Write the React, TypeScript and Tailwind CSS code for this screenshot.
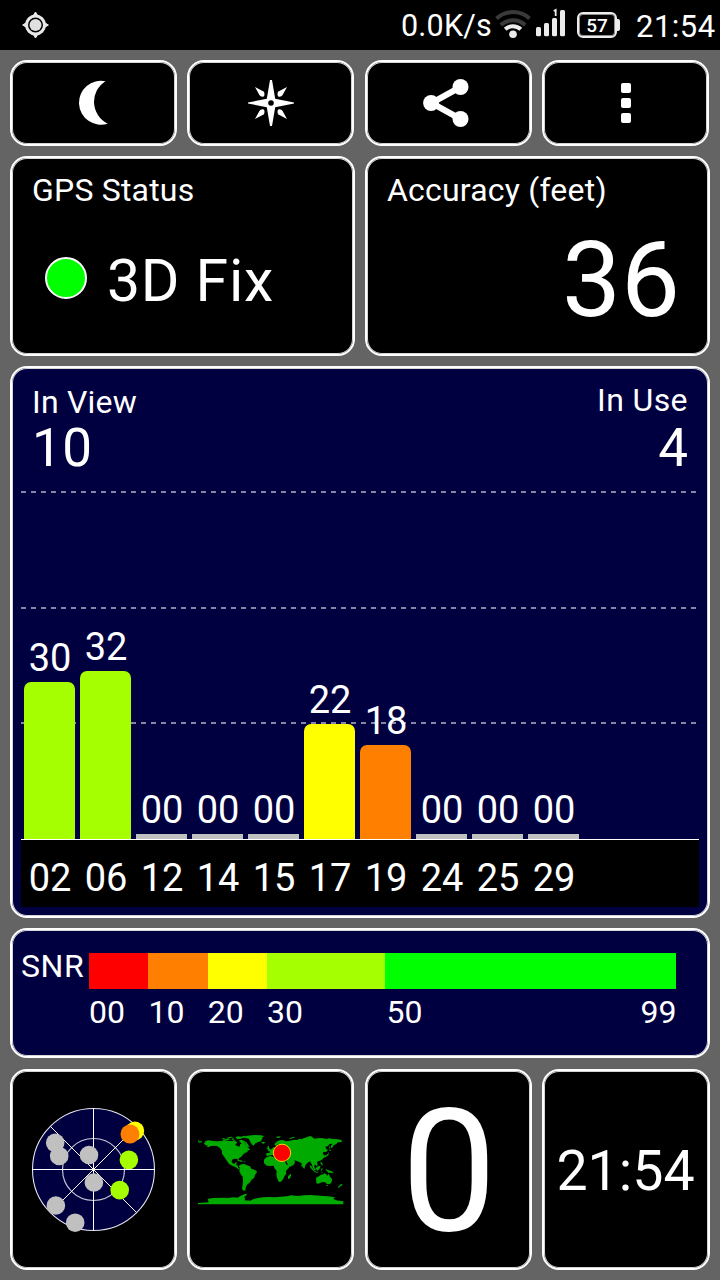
import type { ReactNode } from "react";

function Card({ className = "", children }: { className?: string; children: ReactNode }) {
  return (
    <div
      className={`min-w-0 rounded-[17px] border-2 border-white shadow-[inset_0_0_0_1px_#d4d4d8] ${className}`}
    >
      {children}
    </div>
  );
}

const satellites = [
  { id: "02", snr: "30", height: 157, color: "bg-[#a6ff00]" },
  { id: "06", snr: "32", height: 168, color: "bg-[#a6ff00]" },
  { id: "12", snr: "00", height: 5, color: "bg-[#c0c0c0]" },
  { id: "14", snr: "00", height: 5, color: "bg-[#c0c0c0]" },
  { id: "15", snr: "00", height: 5, color: "bg-[#c0c0c0]" },
  { id: "17", snr: "22", height: 115, color: "bg-[#ffff00]" },
  { id: "19", snr: "18", height: 94, color: "bg-[#ff8000]" },
  { id: "24", snr: "00", height: 5, color: "bg-[#c0c0c0]" },
  { id: "25", snr: "00", height: 5, color: "bg-[#c0c0c0]" },
  { id: "29", snr: "00", height: 5, color: "bg-[#c0c0c0]" },
];

const dash =
  "h-[2px] w-[676px] bg-[repeating-linear-gradient(90deg,#8585a6_0_5px,transparent_5px_10px)]";

function StatusBar() {
  return (
    <header className="flex h-[50px] shrink-0 items-start bg-black">
      <svg className="mt-[12px] ml-[22px]" width="27" height="27" viewBox="0 0 27 27">
        <path d="M13.5 0l2 3.2h-4zM13.5 26l2-3.2h-4zM.6 13l3.2-2v4zM26.4 13l-3.2-2v4z" fill="#e8e8e8" stroke="#e8e8e8" strokeWidth="1" />
        <circle cx="13.5" cy="13" r="9" fill="none" stroke="#e8e8e8" strokeWidth="3" />
        <circle cx="13.5" cy="13" r="6" fill="#e0e0e0" />
      </svg>
      <span className="mt-[11px] ml-[352px] w-[94px] text-[30.5px] leading-[30px] tracking-[0.2px]">0.0K/s</span>
      <svg className="mt-[8px]" width="37" height="31" viewBox="0 0 37 31" fill="none">
        <path d="M1.5 10.5a24.5 24.5 0 0 1 33 0" stroke="#3a3a3a" strokeWidth="4" />
        <path d="M5.8 17a18 18 0 0 1 24.4 0" stroke="#3a3a3a" strokeWidth="4" />
        <path d="M10.2 21.3a11.5 11.5 0 0 1 15.6 0" stroke="#ececec" strokeWidth="4" />
        <circle cx="18" cy="26.2" r="3.8" fill="#ececec" />
      </svg>
      <svg className="mt-[8px] ml-[3px]" width="31" height="30" viewBox="0 0 31 30" fill="#ececec">
        <rect x="1" y="19" width="5" height="9.3" rx="1.5" />
        <rect x="9" y="15" width="5" height="13.3" rx="1.5" />
        <rect x="17" y="10" width="5" height="18.3" rx="1.5" />
        <rect x="25" y="2" width="5" height="26.3" rx="1.5" />
        <path d="M20.7 8V2l-2 1" fill="none" stroke="#ececec" strokeWidth="1.8" />
      </svg>
      <div className="mt-[12px] ml-[11px] flex h-[26px] w-[40px] items-center justify-center rounded-[6px] border-2 border-[#ececec] text-[19px] leading-none font-medium shadow-[inset_0_0_0_1px_#909090]">
        57
      </div>
      <div className="mt-[19px] h-[12px] w-[3px] rounded-r-[2px] bg-[#ececec]" />
      <span className="mt-[11px] ml-[16px] text-[31px] leading-none tracking-[0.5px]">21:54</span>
    </header>
  );
}

function Toolbar() {
  return (
    <div className="grid h-[86px] grid-cols-[167px_168px_167px_167px] gap-[10px]">
      <Card className="flex items-center justify-center bg-black">
        <svg width="29" height="46" viewBox="0 0 29 46">
          <path d="M26.5 1.2A22 22 0 1 0 28.7 43.7A24.3 24.3 0 0 1 26.5 1.2z" fill="#fff" />
        </svg>
      </Card>
      <Card className="mr-px flex items-center justify-center bg-black">
        <svg width="46" height="46" viewBox="-23 -23 46 46" fill="#fff">
          <path d="M0-23L1-23L4.2-4.2L23-.5V.5L4.2 4.2L1 23H-1L-4.2 4.2L-23 .5V-.5L-4.2-4.2L-1-23z" />
          <path d="M16-16L7-11.2Q5.6-7 8-6.2Q10.6-6 11.6-8z" />
          <path d="M16 16L7 11.2Q5.6 7 8 6.2Q10.6 6 11.6 8z" />
          <path d="M-16-16L-7-11.2Q-5.6-7-8-6.2Q-10.6-6-11.6-8z" />
          <path d="M-16 16L-7 11.2Q-5.6 7-8 6.2Q-10.6 6-11.6 8z" />
          <circle r="2.8" fill="#000" />
        </svg>
      </Card>
      <Card className="flex items-center justify-center bg-black">
        <svg className="-translate-x-[3.5px]" width="48" height="50" viewBox="0 0 48 50" fill="#fff">
          <path d="M39 9L10 25L39 41" fill="none" stroke="#fff" strokeWidth="6" />
          <circle cx="39" cy="9" r="8" />
          <circle cx="9.6" cy="25" r="8" />
          <circle cx="39" cy="41" r="8" />
        </svg>
      </Card>
      <Card className="flex flex-col items-center justify-center gap-[5px] bg-black pl-px">
        <i className="size-[10px] rounded-[2px] bg-white" />
        <i className="size-[10px] rounded-[2px] bg-white" />
        <i className="size-[10px] rounded-[2px] bg-white" />
      </Card>
    </div>
  );
}

function SatelliteChart() {
  return (
    <Card className="relative h-[552px] bg-[#000040]">
      <div className="flex justify-between px-[20px] pt-[16px]">
        <div>
          <div className="mt-[2px] text-[32px] leading-none tracking-[0.2px]">In View</div>
          <div className="mt-[4px] text-[53px] leading-[52px] tracking-[0.4px]">10</div>
        </div>
        <div className="text-right">
          <div className="text-[32px] leading-none tracking-[0.4px]">In Use</div>
          <div className="mt-[6px] text-[53px] leading-[52px]">4</div>
        </div>
      </div>
      <div className="absolute top-[123px] left-[9px] flex flex-col gap-[113.5px]">
        <div className={dash} />
        <div className={dash} />
        <div className={dash} />
      </div>
      <div className="absolute top-[244px] left-[9px] flex h-[228px] w-[678px] items-end gap-[5px] border-b border-white pl-[3px]">
        {satellites.map((s) => (
          <div key={s.id} className="flex w-[51px] flex-col items-center">
            <span className="mb-[5px] ml-px text-[38px] leading-none tracking-[-0.2px]">{s.snr}</span>
            <div
              className={`w-full ${s.height > 10 ? "rounded-t-[7px]" : ""} ${s.color}`}
              style={{ height: s.height }}
            />
          </div>
        ))}
      </div>
      <div className="absolute top-[472px] left-[9px] flex h-[67px] w-[678px] gap-[5px] bg-black pt-[19px] pl-[3px]">
        {satellites.map((s) => (
          <span key={s.id} className="w-[51px] pl-px text-center text-[38px] leading-none tracking-[-0.2px]">
            {s.id}
          </span>
        ))}
      </div>
    </Card>
  );
}

function SnrLegend() {
  return (
    <Card className="flex h-[130px] bg-[#000040] pl-[9px]">
      <div className="mt-[20px] w-[68px] text-[32px] leading-none tracking-[0.6px]">SNR</div>
      <div className="pt-[23px]">
        <div className="flex h-[36px]">
          <div className="w-[59.4px] bg-[#ff0000]" />
          <div className="w-[59.3px] bg-[#ff8000]" />
          <div className="w-[59.3px] bg-[#ffff00]" />
          <div className="w-[118.5px] bg-[#a6ff00]" />
          <div className="w-[291px] bg-[#00ff00]" />
        </div>
        <div className="mt-[7px] flex text-[32px] leading-none">
          <span className="w-[59.4px]">00</span>
          <span className="w-[59.3px]">10</span>
          <span className="w-[59.3px]">20</span>
          <span className="w-[119.5px]">30</span>
          <span className="w-[100px]">50</span>
          <span className="w-[190px] text-right">99</span>
        </div>
      </div>
    </Card>
  );
}

function SkyView() {
  return (
    <svg className="-translate-x-[0.5px] -translate-y-[0.5px]" width="126" height="126" viewBox="-63 -63 126 126">
      <circle r="61" fill="#000040" stroke="#e4e4ee" strokeWidth="1.1" />
      <circle r="31" fill="none" stroke="#c4c4d6" strokeWidth="1.2" />
      <path d="M-61 0H61M0-61V61M-43-43L43 43M43-43L-43 43" stroke="#fff" strokeWidth="1" />
      <g fill="#c0c0c0">
        <circle cx="-38.3" cy="-26.7" r="9.3" />
        <circle cx="-34.3" cy="-13.5" r="9.3" />
        <circle cx="-4.5" cy="-14.5" r="9.3" />
        <circle cx="0.4" cy="13" r="9.3" />
        <circle cx="-37.6" cy="36" r="9.3" />
        <circle cx="-18.3" cy="53.2" r="9.3" />
      </g>
      <circle cx="41.4" cy="-38.7" r="9.3" fill="#ffff00" />
      <circle cx="36.5" cy="-35.5" r="9.5" fill="#ff8000" />
      <circle cx="35.4" cy="-9.7" r="9.3" fill="#a6ff00" />
      <circle cx="26.2" cy="20.6" r="9.3" fill="#a6ff00" />
    </svg>
  );
}

function WorldMap() {
  return (
    <svg width="150" height="75" viewBox="48 66 450 225" fill="#00aa00">
      <path d="M54 91l3-1v4h9v3l-10 1zM71 99l6-3-2-3 10-2 14 2 12 1 14-1 6-3 12 2 14 1 7-3 3 4 5 3-6 7 4 3 9 3 1-7 5-2-6-6 2-3 8 4 5 3 4 8 8 7 5 5-9 3 1 4-9 3-6 6-4 5-7 4-2 8-3-5-9-1-7 3-1 6 3 5 5 1 5-4h3l-3 8 6 2 0 6 6 3-4 2-9-6-8-4-11-5-5-7-6-9-6-9-5-7v-9l-6-7-7-6-10-2-10 1-8 4-6-4 5-3-7 1z" />
      <path d="M124 87l8-3 4 3 10-2 6 3-12 3zM138 83l14-3 8 1-8 3zM154 87l6-2 3 3-5 3zM166 82l8-3 10 1 8-3 6 2-9 4-8 4-9 1zM176 92l8-3 9 4 8 5 4 7 4 6-8-1-7-4 4-4-8-5-9-2z" />
      <path d="M186 82l16-5 20-2 22 1 8 3-6 4 2 4-5 3 2 3-10 3-9 4-5 7-6-4-5-9-4-8-9-2z" />
      <path d="M244 97l7-2 5 2-5 4-6-1zM259 115l4-1-1-5 3-2 4 9 4 6-9 2 1-4zM172 150l10 1 9 3-8 1-10-3zM190 154l8 1-5 2z" />
      <path d="M177 167l7-4 9-1 8 4 9 3 4 7 9 3 7 4v6l-5 5-2 9-9 7-5 8-7 5-4 8-2 8 3 2-9 1-4-6 2-12 1-12-1-12-5-6-5-10 1-9z" />
      <path d="M259 138v-9h8l3-2-3-7 8-3 7-7 3 5 9-2 4-7-3-4-6 5-5-1v-5l6-6 8-4 11-1 9 4 12-2 12-3 10 1 5-4 9 2 4-3 10-3 13-3 5 4 7 3 11-2 13 1 10 2 9-2 11 2 14 1 12 2v6l-12 1-4 5-8 4-5 8-4-1 2-8 5-4-10 1-6 7-7 1 3 6 5 5-7 6-6-2-3 5 5 7-2 7-7 7-9 3-4 2 2 7-2 6-7-6-1 9 5 7-4 3-6-11-3-9-5-8-7 4-7 8-3 11-5-5-4-13-8-4-8-3-5-1 2 6-4 7-10 6-5-2-7-13 2-9-8-3-8 1-4-8-7-1-9 3-8-3z" />
      <path d="M260 141l12-3 10 4 12 2 16 1 5 11 5 8 10 1-3 8-9 9 1 9-5 6-4 9-7 9-6 1-5-9-3-15 1-9-7-9-2-7-11 1-10-1-8-8v-10z" />
      <path d="M333 191v7l-5 9-4-1v-8zM388 164l7 5 5 9 4 3-4 2-8-9zM407 174l9-7 6 2-4 9-7 4zM402 184l15 2-4 2-12-2zM425 175h3l-2 8-3-2zM435 176l9 4 12 4 5 6-9-2-6 1-6-7zM420 155l6 3 3 10-6-5zM429 138l12-4 6-8-2 10-9 6-7 1zM447 118l7 3-4 3zM448 104l3 11-3 2zM363 164l4 2-2 4zM422 187l8 1-4 2z" />
      <path d="M408 203l9-4 5-5 8-1 2-3 7 2 2 6 5-7 4 9 6 7-1 10-6 6-8-1-7-6-9 1-10 4-6-1zM438 224l7 1-4 4zM484 221l4 3-12 9-3-1z" />
      <path d="M288 80l14-1-3 4-8 1zM327 85l15-5 3 2-13 5zM382 80l10-1 8 4-9 1z" />
      <path d="M54 279l32-2-3-10 16-3 28-1 18 1 15-2 13 1 8-5 12-5 9-2-4 6-6 4 4 5-3 5 18 1 8-4 15-4 16-2 16-1 18 1 19-2 18-1 13-3 18 2 20-2 20-1 28 2 24 2 21 3-5 4 8 5 22 3v9H54z" />
      <circle cx="306" cy="128.5" r="26" fill="#ff0000" stroke="#ffe000" strokeWidth="2.8" />
    </svg>
  );
}

export default function App() {
  return (
    <div className="flex h-[1280px] w-[720px] flex-col overflow-hidden bg-[#646464] font-['Roboto',sans-serif] text-white">
      <StatusBar />
      <main className="flex w-[720px] flex-col gap-[10px] p-[10px]">
        <Toolbar />
        <div className="grid h-[200px] grid-cols-2 gap-[10px]">
          <Card className="bg-black px-[20px] pt-[16px]">
            <div className="text-[32px] leading-none tracking-[0.2px]">GPS Status</div>
            <div className="mt-[45px] flex items-center">
              <div className="mt-[-5px] ml-[13px] size-[42px] rounded-full border-2 border-white bg-[#00ff00]" />
              <div className="ml-[20px] text-[59px] leading-none tracking-[0.7px]">3D Fix</div>
            </div>
          </Card>
          <Card className="bg-black pt-[16px] pr-[28px] pl-[20px]">
            <div className="text-[32px] leading-none tracking-[0.2px]">Accuracy (feet)</div>
            <div className="mt-[22px] text-right text-[105px] leading-[106px]">36</div>
          </Card>
        </div>
        <SatelliteChart />
        <SnrLegend />
        <div className="mt-px grid h-[201px] grid-cols-[167px_168px_167px_168px] gap-[10px]">
          <Card className="flex items-center justify-center bg-black">
            <SkyView />
          </Card>
          <Card className="mr-px flex items-center justify-center bg-black">
            <WorldMap />
          </Card>
          <Card className="flex justify-center bg-black">
            <div className="mt-[16px] ml-px text-[170px] leading-[171px]">0</div>
          </Card>
          <Card className="flex justify-center bg-black">
            <div className="mt-[73px] mr-px text-[55.5px] leading-[56px]">21:54</div>
          </Card>
        </div>
      </main>
    </div>
  );
}
